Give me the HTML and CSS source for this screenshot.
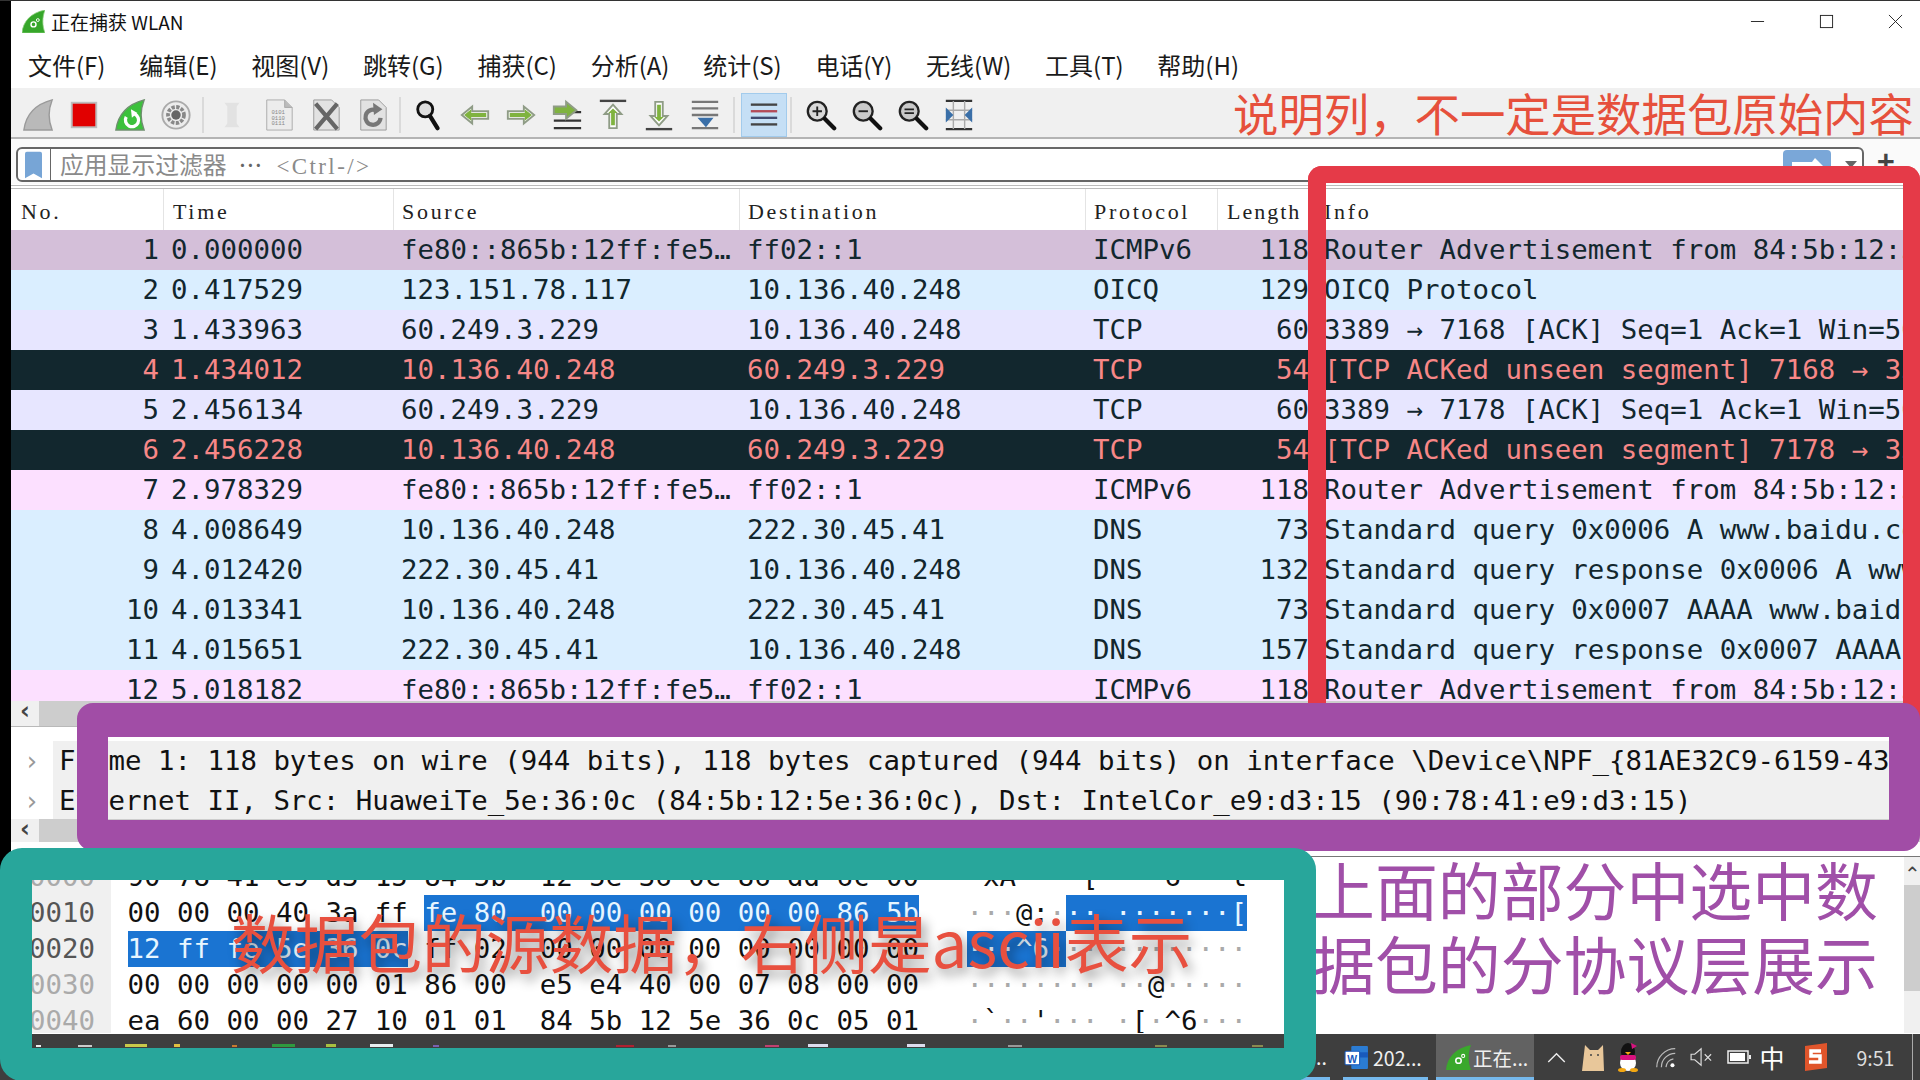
FILE: index.html
```html
<!DOCTYPE html>
<html lang="zh-CN">
<head>
<meta charset="utf-8">
<title>正在捕获 WLAN</title>
<link rel="stylesheet" href="styles.css">
</head>
<body>
<div class="screen">
  <div class="desk">
    <div class="strip"></div>
    <div class="window">
      <header class="titlebar">
        <svg class="applogo" viewBox="0 0 24 24"><path d="M0 24C1 12 9 3 24 0c-3 8-3 16 0 24z" fill="#36a62a" stroke="#8ccf7c" stroke-width=".8"/><circle cx="12" cy="15" r="2.600" fill="none" stroke="#fff" stroke-width="1.500"/><circle cx="16.500" cy="10.500" r="1.500" fill="none" stroke="#fff"/></svg>
        <span class="apptitle">正在捕获 WLAN</span>
        <div class="winctl">
          <svg viewBox="0 0 16 16"><path d="M1 8h14" stroke="#222" fill="none"/></svg>
          <svg viewBox="0 0 16 16"><rect x="1.500" y="1.500" width="13" height="13" stroke="#222" fill="none"/></svg>
          <svg viewBox="0 0 16 16"><path d="M1 1l14 14M15 1L1 15" stroke="#222" fill="none"/></svg>
        </div>
      </header>
      <nav class="menubar">
        <span>文件(F)</span><span>编辑(E)</span><span>视图(V)</span><span>跳转(G)</span><span>捕获(C)</span><span>分析(A)</span><span>统计(S)</span><span>电话(Y)</span><span>无线(W)</span><span>工具(T)</span><span>帮助(H)</span>
      </nav>
      <div class="toolbar">
        <div class="tb"><svg viewBox="0 0 34 34"><path d="M2 33C4 18 13 6 32 1c-4 10-4 22 0 32z" fill="#b9b9b9" stroke="#9a9a9a" stroke-width="1.500"/></svg></div>
        <div class="tb"><svg viewBox="0 0 34 34"><rect x="4" y="4" width="26" height="26" fill="#e10000" stroke="#bdbdbd" stroke-width="2"/></svg></div>
        <div class="tb"><svg viewBox="0 0 34 34"><path d="M2 33C4 18 13 6 32 1c-4 10-4 22 0 32z" fill="#3cc13c" stroke="#6e8f6e" stroke-width="1.500"/><path d="M13 19a7 7 0 1 0 9-3" fill="none" stroke="#fff" stroke-width="3.500"/><path d="M18 11l7 4-6 5z" fill="#fff"/></svg></div>
        <div class="tb"><svg viewBox="0 0 34 34"><circle cx="17" cy="17" r="14.500" fill="#ececec" stroke="#aaa" stroke-width="2"/><circle cx="17" cy="17" r="8.500" fill="none" stroke="#888" stroke-width="4" stroke-dasharray="3.500 1.500"/><circle cx="17" cy="17" r="5" fill="#666"/></svg></div>
        <div class="sep"></div>
        <div class="tb wide"><svg viewBox="0 0 34 34"><path d="M9 4h16l-3 4v18l3 4H9l3-4V8z" fill="#e2e2e2"/></svg></div>
        <div class="tb wide"><svg viewBox="0 0 34 34"><path d="M4 1h19l8 8v24H4z" fill="#ececec" stroke="#aaa"/><path d="M23 1v8h8" fill="#bbb" stroke="#aaa"/><text x="9" y="16" class="bits">0101</text><text x="9" y="22" class="bits">0110</text><text x="9" y="28" class="bits">0111</text></svg></div>
        <div class="tb wide"><svg viewBox="0 0 34 34"><path d="M4 1h19l8 8v24H4z" fill="#e2e2e2" stroke="#999"/><path d="M6 5l23 27M29 5L6 32" stroke="#666" stroke-width="4.500"/></svg></div>
        <div class="tb wide"><svg viewBox="0 0 34 34"><path d="M4 1h19l8 8v24H4z" fill="#e2e2e2" stroke="#999"/><path d="M25 20a8 8 0 1 1-5-8" fill="none" stroke="#777" stroke-width="4.500"/><path d="M17 4l10 7-9 6z" fill="#777"/></svg></div>
        <div class="sep sep2"></div>
        <div class="tb"><svg viewBox="0 0 34 34"><circle cx="13" cy="11" r="8" fill="#ddd" stroke="#111" stroke-width="3"/><path d="M18 18l8 13" stroke="#111" stroke-width="4.500" stroke-linecap="round"/></svg></div>
        <div class="tb"><svg viewBox="0 0 34 34"><path d="M3 17L14 8v5h17v8H14v5z" fill="#fff" stroke="#8f9c86" stroke-width="2"/><path d="M7 17l5-4v3h16v2H12v3z" fill="#7fb33f" stroke="#7fb33f" stroke-width="2"/></svg></div>
        <div class="tb"><svg viewBox="0 0 34 34"><path d="M31 17L20 8v5H3v8h17v5z" fill="#fff" stroke="#8f9c86" stroke-width="2"/><path d="M27 17l-5-4v3H6v2h16v3z" fill="#7fb33f" stroke="#7fb33f" stroke-width="2"/></svg></div>
        <div class="tb"><svg viewBox="0 0 34 34"><path d="M3 14h29M3 23h29M3 31h29" stroke="#333" stroke-width="2.500"/><path d="M27 12L16 3v5H3v8h13v5z" fill="#7fb33f" stroke="#8f9c86" stroke-width="2"/></svg></div>
        <div class="tb"><svg viewBox="0 0 34 34"><path d="M3 2h28" stroke="#444" stroke-width="2.500"/><path d="M17 6l9 10h-5v15h-8V16H8z" fill="#fff" stroke="#8f9c86" stroke-width="2"/><path d="M17 10l5 5h-3v13h-4V15h-3z" fill="#7fb33f"/></svg></div>
        <div class="tb"><svg viewBox="0 0 34 34"><path d="M3 32h28" stroke="#444" stroke-width="2.500"/><path d="M17 28l9-10h-5V3h-8v15H8z" fill="#fff" stroke="#8f9c86" stroke-width="2"/><path d="M17 24l5-5h-3V6h-4v13h-3z" fill="#7fb33f"/></svg></div>
        <div class="tb"><svg viewBox="0 0 34 34"><path d="M3 3h28M3 10h28M3 17h28M3 31h28" stroke="#777" stroke-width="2.500"/><path d="M9 20h17l-8 10z" fill="#3a6fa8"/></svg></div>
        <div class="sep sep3"></div>
        <div class="tb active"><svg viewBox="0 0 34 34"><path d="M3 6h28" stroke="#444" stroke-width="2.500"/><path d="M3 13h28" stroke="#b34a58" stroke-width="2.500"/><path d="M3 20h28" stroke="#404a70" stroke-width="2.500"/><path d="M3 27h28" stroke="#444" stroke-width="2.500"/></svg></div>
        <div class="sep sep4"></div>
        <div class="tb"><svg viewBox="0 0 34 34"><circle cx="13" cy="13" r="10" fill="#d8d8d8" stroke="#222" stroke-width="2.500"/><path d="M8 13h10M13 8v10" stroke="#222" stroke-width="2"/><path d="M21 21l10 10" stroke="#111" stroke-width="4.500" stroke-linecap="round"/></svg></div>
        <div class="tb"><svg viewBox="0 0 34 34"><circle cx="13" cy="13" r="10" fill="#c9c9c9" stroke="#222" stroke-width="2.500"/><path d="M8 13h10" stroke="#222" stroke-width="2"/><path d="M21 21l10 10" stroke="#111" stroke-width="4.500" stroke-linecap="round"/></svg></div>
        <div class="tb"><svg viewBox="0 0 34 34"><circle cx="13" cy="13" r="10" fill="#c9c9c9" stroke="#222" stroke-width="2.500"/><path d="M8 11h10M8 15h10" stroke="#222" stroke-width="2"/><path d="M21 21l10 10" stroke="#111" stroke-width="4.500" stroke-linecap="round"/></svg></div>
        <div class="tb"><svg viewBox="0 0 34 34"><path d="M3 2h28M3 32h28" stroke="#333" stroke-width="2.500"/><path d="M3 12h28M3 22h28M11 2v30M23 2v30" stroke="#aaa" stroke-width="1.500"/><path d="M3 9l8 8-8 8zM31 9l-8 8 8 8z" fill="#3a6fa8"/></svg></div>
      </div>
      <div class="filterbar">
        <div class="filterbox">
          <svg class="bookmark" viewBox="0 0 18 28"><path d="M0 2a2 2 0 0 1 2-2h14a2 2 0 0 1 2 2v26l-9-5-9 5z" fill="#77a5d6"/></svg>
          <span class="filtertext">应用显示过滤器<span class="dots">⋯</span><span class="hint">&lt;Ctrl-/&gt;</span></span>
          <div class="applybtn"><svg viewBox="0 0 48 30"><rect width="48" height="30" rx="4" fill="#7aa7d8"/><path d="M9 12h20l3-4 8 8-8 8v-5H9z" fill="#fff"/></svg></div>
          <span class="dropdown"></span>
        </div>
        <span class="plus">+</span>
      </div>
      <div class="rule"></div>
      <div class="listhead grid">
        <span class="c-no">No.</span><span class="c-time">Time</span><span class="c-src">Source</span><span class="c-dst">Destination</span><span class="c-pr">Protocol</span><span class="c-len">Length</span><span class="c-info">Info</span>
      </div>
      <section class="list">
        <div class="row grid icmp1"><span class="n">1</span><span class="t">0.000000</span><span class="s">fe80::865b:12ff:fe5…</span><span class="s">ff02::1</span><span class="s">ICMPv6</span><span class="n">118</span><span class="i">Router Advertisement from 84:5b:12:5e:36:0c</span></div>
        <div class="row grid blue"><span class="n">2</span><span class="t">0.417529</span><span class="s">123.151.78.117</span><span class="s">10.136.40.248</span><span class="s">OICQ</span><span class="n">129</span><span class="i">OICQ Protocol</span></div>
        <div class="row grid tcp"><span class="n">3</span><span class="t">1.433963</span><span class="s">60.249.3.229</span><span class="s">10.136.40.248</span><span class="s">TCP</span><span class="n">60</span><span class="i">3389 → 7168 [ACK] Seq=1 Ack=1 Win=5000 Len=0</span></div>
        <div class="row grid bad"><span class="n">4</span><span class="t">1.434012</span><span class="s">10.136.40.248</span><span class="s">60.249.3.229</span><span class="s">TCP</span><span class="n">54</span><span class="i">[TCP ACKed unseen segment] 7168 → 3389 [ACK] Seq=1</span></div>
        <div class="row grid tcp"><span class="n">5</span><span class="t">2.456134</span><span class="s">60.249.3.229</span><span class="s">10.136.40.248</span><span class="s">TCP</span><span class="n">60</span><span class="i">3389 → 7178 [ACK] Seq=1 Ack=1 Win=5000 Len=0</span></div>
        <div class="row grid bad"><span class="n">6</span><span class="t">2.456228</span><span class="s">10.136.40.248</span><span class="s">60.249.3.229</span><span class="s">TCP</span><span class="n">54</span><span class="i">[TCP ACKed unseen segment] 7178 → 3389 [ACK] Seq=1</span></div>
        <div class="row grid pink"><span class="n">7</span><span class="t">2.978329</span><span class="s">fe80::865b:12ff:fe5…</span><span class="s">ff02::1</span><span class="s">ICMPv6</span><span class="n">118</span><span class="i">Router Advertisement from 84:5b:12:5e:36:0c</span></div>
        <div class="row grid blue"><span class="n">8</span><span class="t">4.008649</span><span class="s">10.136.40.248</span><span class="s">222.30.45.41</span><span class="s">DNS</span><span class="n">73</span><span class="i">Standard query 0x0006 A www.baidu.com</span></div>
        <div class="row grid blue"><span class="n">9</span><span class="t">4.012420</span><span class="s">222.30.45.41</span><span class="s">10.136.40.248</span><span class="s">DNS</span><span class="n">132</span><span class="i">Standard query response 0x0006 A www.baidu.com</span></div>
        <div class="row grid blue"><span class="n">10</span><span class="t">4.013341</span><span class="s">10.136.40.248</span><span class="s">222.30.45.41</span><span class="s">DNS</span><span class="n">73</span><span class="i">Standard query 0x0007 AAAA www.baidu.com</span></div>
        <div class="row grid blue"><span class="n">11</span><span class="t">4.015651</span><span class="s">222.30.45.41</span><span class="s">10.136.40.248</span><span class="s">DNS</span><span class="n">157</span><span class="i">Standard query response 0x0007 AAAA www.baidu.com</span></div>
        <div class="row grid pink"><span class="n">12</span><span class="t">5.018182</span><span class="s">fe80::865b:12ff:fe5…</span><span class="s">ff02::1</span><span class="s">ICMPv6</span><span class="n">118</span><span class="i">Router Advertisement from 84:5b:12:5e:36:0c</span></div>
      </section>
      <div class="hscroll listscroll"><span class="harrow">‹</span><span class="thumb"></span></div>
      <section class="details">
        <div class="drow"><span class="exp">›</span><span class="dtext">Frame 1: 118 bytes on wire (944 bits), 118 bytes captured (944 bits) on interface \Device\NPF_{81AE32C9-6159-43A1-8F2C-7D1E0A5B6C33}, id 0</span></div>
        <div class="drow"><span class="exp">›</span><span class="dtext">Ethernet II, Src: HuaweiTe_5e:36:0c (84:5b:12:5e:36:0c), Dst: IntelCor_e9:d3:15 (90:78:41:e9:d3:15)</span></div>
      </section>
      <div class="hscroll detailscroll"><span class="harrow">‹</span><span class="thumb"></span></div>
      <section class="hexpane">
        <div class="hexrows">
          <div class="hexrow"><span class="off dim">0000</span><span class="hex">90 78 41 e9 d3 15 84 5b  12 5e 36 0c 86 dd 6c 00</span><span class="asc"><i>·</i>xA<i>····</i>[  <i>·</i>^6<i>···</i>l<i>·</i></span></div>
          <div class="hexrow"><span class="off">0010</span><span class="hex">00 00 00 40 3a ff <b>fe 80  00 00 00 00 00 00 86 5b</b></span><span class="asc"><i>···</i>@:<i>·</i><b>·· ·······[</b></span></div>
          <div class="hexrow"><span class="off">0020</span><span class="hex"><b>12 ff fe 5e 36 0c</b> ff 02  00 00 00 00 00 00 00 00</span><span class="asc"><b>···^6·</b><i>··</i> <i>········</i></span></div>
          <div class="hexrow"><span class="off dim">0030</span><span class="hex">00 00 00 00 00 01 86 00  e5 e4 40 00 07 08 00 00</span><span class="asc"><i>········</i> <i>··</i>@<i>·····</i></span></div>
          <div class="hexrow"><span class="off dim">0040</span><span class="hex">ea 60 00 00 27 10 01 01  84 5b 12 5e 36 0c 05 01</span><span class="asc"><i>·</i>`<i>··</i>'<i>···</i> <i>·</i>[<i>·</i>^6<i>···</i></span></div>
        </div>
        <div class="vscroll"><span class="varrow">⌃</span><span class="vthumb"></span></div>
      </section>
    </div>
  </div>
  <footer class="taskbar">
    <svg class="peek" viewBox="0 0 1316 46"><rect x="36" y="11" width="5" height="2" fill="#eee"/><rect x="78" y="11" width="14" height="2" fill="#ccc"/><rect x="125" y="10" width="22" height="3" fill="#c9c94a"/><rect x="174" y="10" width="6" height="3" fill="#e0c040"/><rect x="232" y="11" width="5" height="2" fill="#c87a30"/><rect x="272" y="10" width="23" height="3" fill="#2f9a3f"/><rect x="326" y="10" width="10" height="3" fill="#a8c040"/><rect x="370" y="10" width="23" height="3" fill="#e8eef0"/><rect x="433" y="11" width="6" height="2" fill="#7a60b0"/><rect x="616" y="11" width="18" height="2" fill="#b02030"/><rect x="668" y="11" width="8" height="2" fill="#999"/><rect x="765" y="11" width="14" height="2" fill="#c04070"/><rect x="808" y="10" width="20" height="3" fill="#dde"/><rect x="907" y="10" width="18" height="3" fill="#dde"/><rect x="1008" y="11" width="14" height="2" fill="#999"/><rect x="1155" y="11" width="12" height="2" fill="#8a8a50"/><rect x="1252" y="11" width="11" height="2" fill="#8a8a50"/></svg>
    <span class="tk-dots">..</span>
    <div class="tk-item tk-word"><svg viewBox="0 0 24 24"><rect x="7" y="1" width="16" height="22" rx="1" fill="#2b7cd3"/><rect x="7" y="7" width="16" height="5" fill="#185abd"/><rect x="1" y="6" width="14" height="13" rx="1" fill="#fff" stroke="#185abd"/><text x="3" y="17" class="w">W</text></svg><span>202...</span></div>
    <div class="tk-item tk-active"><svg viewBox="0 0 24 24"><path d="M0 24C1 12 9 3 24 0c-3 8-3 16 0 24z" fill="#3aa82c"/><circle cx="12" cy="15" r="2.600" fill="none" stroke="#fff" stroke-width="1.500"/><circle cx="16.500" cy="10.500" r="1.500" fill="none" stroke="#fff"/></svg><span>正在...</span></div>
    <div class="tray">
      <svg class="t-chev" viewBox="0 0 20 12"><path d="M1 11l9-9 9 9" fill="none" stroke="#eee" stroke-width="1.500"/></svg>
      <svg class="t-cat" viewBox="0 0 26 30"><path d="M4 3l5 5h8l5-5 1 26H1z" fill="#e8c79a"/><circle cx="10" cy="13" r="1" fill="#444"/><circle cx="17" cy="13" r="1" fill="#444"/></svg>
      <svg class="t-qq" viewBox="0 0 22 30"><ellipse cx="11" cy="10" rx="7" ry="9" fill="#111"/><ellipse cx="11" cy="21" rx="8" ry="8" fill="#fff"/><rect x="3" y="13" width="16" height="5" rx="2" fill="#d8127f"/><path d="M14 1l6 3-5 3z" fill="#d8127f"/><path d="M8 10h6l-3 3z" fill="#f3a712"/><ellipse cx="5" cy="28" rx="4" ry="2" fill="#f3a712"/><ellipse cx="17" cy="28" rx="4" ry="2" fill="#f3a712"/></svg>
      <svg class="t-wifi" viewBox="0 0 26 26"><path d="M3 24a20 20 0 0 1 20-20M8 24a15 15 0 0 1 15-15M13 24a10 10 0 0 1 8-9" fill="none" stroke="#bbb" stroke-width="1.300"/><circle cx="20" cy="22" r="2.200" fill="#fff"/></svg>
      <svg class="t-vol" viewBox="0 0 26 22"><path d="M1 8h4l7-6v18l-7-6H1z" fill="none" stroke="#ddd" stroke-width="1.300"/><path d="M16 8l7 7M23 8l-7 7" stroke="#ddd" stroke-width="1.300"/></svg>
      <svg class="t-bat" viewBox="0 0 24 14"><rect x="1" y="1" width="20" height="12" fill="none" stroke="#eee" stroke-width="1.500"/><rect x="3" y="3" width="15" height="8" fill="#fff"/><rect x="22" y="5" width="2" height="4" fill="#eee"/></svg>
      <span class="t-ime">中</span>
      <svg class="t-sogou" viewBox="0 0 26 28"><path d="M3 3l22-3v25L3 28z" fill="#e0552b"/><path d="M19 8H9v5h9v6H7" fill="none" stroke="#fff" stroke-width="3.500"/></svg>
      <span class="t-time">9:51</span>
      <span class="t-desk"></span>
    </div>
    <div class="tk-strips"><span class="st1"></span><span class="st2"></span><span class="st3"></span></div>
  </footer>

  <div class="note side">上面的部分中选中数<br>据包的分协议层展示</div>
  <div class="note-box red"></div>
  <div class="note-box purple"></div>
  <div class="note-box teal"></div>
  <div class="note top">说明列，不一定是数据包原始内容</div>
  <div class="note raw">数据包的源数据，右侧是ascii表示</div>
</div>
</body>
</html>
```
FILE: styles.css
```css
* { box-sizing: border-box; }
html, body { margin: 0; padding: 0; background: #fff; }
body { font-family: "Noto Sans CJK SC", "Noto Sans", sans-serif; color: #111; }
.screen { position: relative; width: 1920px; height: 1080px; overflow: hidden; display: flex; flex-direction: column; border-top: 1px solid #333; }
.desk { flex: 1; display: flex; min-height: 0; }
.strip { width: 11px; background: #000; flex: none; }
.window { flex: 1; min-width: 0; display: flex; flex-direction: column; background: #fff; }

.titlebar { height: 40px; display: flex; align-items: center; flex: none; padding-left: 11px; }
.applogo { width: 23px; height: 23px; }
.apptitle { font-size: 19px; margin-left: 6px; line-height: 1; }
.winctl { margin-left: auto; display: flex; gap: 54px; padding-right: 17px; }
.winctl svg { width: 15px; height: 15px; display: block; }

.menubar { height: 47px; flex: none; display: flex; align-items: center; gap: 33.700px; padding: 1px 0 0 17px; font-size: 24px; line-height: 1; color: #1a1a1a; }

.toolbar { height: 51px; flex: none; display: flex; align-items: center; padding: 4px 0 0 4px; background: #f0f0f0; border-bottom: 2px solid #b4b4b4; }
.tb { width: 46px; height: 44px; flex: none; display: flex; align-items: center; justify-content: center; }
.tb.wide { width: 47px; }
.tb svg { width: 32px; height: 32px; }
.tb.active { background: #c5dff5; border: 1px solid #a2cbec; }
.sep { width: 2px; height: 36px; background: #dadada; flex: none; margin: 0 4px 0 3px; }
.sep2 { margin: 0 5px 0 3px; }
.sep3 { margin: 0 6px 0 5px; }
.sep4 { margin: 0 6px 0 3px; }

.filterbar { height: 45px; flex: none; display: flex; padding: 8px 0 2px 5px; background: #fafafa; }
.filterbox { width: 1848px; height: 35px; border: 2px solid #666; border-radius: 6px; background: #fff; display: flex; align-items: center; padding-left: 7px; overflow: hidden; }
.bookmark { width: 17px; height: 28px; flex: none; }
.filtertext { margin-left: 8px; padding-left: 9px; border-left: 1px solid #666; font-size: 23.800px; line-height: 29px; color: #8a8a8a; white-space: pre; }
.dots { margin-left: 12px; color: #666; }
.hint { margin-left: 14px; font-family: "Liberation Serif", serif; font-size: 23px; letter-spacing: 2.400px; }
.applybtn { margin-left: auto; width: 48px; height: 30px; flex: none; }
.applybtn svg { width: 48px; height: 30px; display: block; }
.dropdown { width: 0; height: 0; margin: 0 5px 0 14px; border-left: 6px solid transparent; border-right: 6px solid transparent; border-top: 7px solid #666; flex: none; }
.plus { margin-left: 13px; font-size: 30px; line-height: 26px; color: #444; font-weight: 700; }
.rule { height: 4px; flex: none; border-top: 1px solid #bbb; border-bottom: 1px solid #bbb; background: #fff; margin-top: 1px; }

.grid { display: grid; grid-template-columns: 153px 230px 346px 346px 132px 96px 1fr; }
.bits { font-family: "Liberation Mono", monospace; font-size: 6px; fill: #888; }
.listhead { height: 41px; flex: none; align-items: stretch; font-family: "Liberation Serif", serif; font-size: 22px; letter-spacing: 2.700px; line-height: 46px; color: #222; background: #fff; overflow: hidden; }
.listhead span { border-right: 1px solid #e4e4e4; white-space: pre; }
.listhead .c-info { border-right: 0; }
.listhead .c-len { letter-spacing: 2px; }
.c-no { padding-left: 10px; }
.c-time { padding-left: 9px; }
.c-src, .c-dst, .c-pr { padding-left: 8px; }
.c-len { padding-left: 9px; }
.c-info { padding-left: 10px; }

.list { height: 471px; flex: none; overflow: hidden; font-family: "DejaVu Sans Mono", monospace; font-size: 27.400px; }
.row { height: 40px; line-height: 40px; white-space: pre; overflow: hidden; color: #12272e; }
.row span { overflow: hidden; }
.row .n { text-align: right; padding-right: 5px; }
.row .t { padding-left: 7px; }
.row .s { padding-left: 7px; }
.row .i { padding-left: 10px; }
.icmp1 { background: #d4bfd9; }
.blue { background: #daeeff; }
.tcp { background: #e7e6ff; }
.pink { background: #fce0ff; }
.bad { background: #12272e; color: #f78787; }

.hscroll { flex: none; display: flex; align-items: stretch; background: #f0f0f0; }
.listscroll { height: 25px; }
.detailscroll { height: 23px; margin-bottom: 14px; }
.harrow { width: 28px; text-align: center; font-family: "DejaVu Sans", sans-serif; font-size: 24px; line-height: 20px; color: #444; font-weight: 700; }
.thumb { flex: 1; background: #cdcdcd; }

.details { height: 93px; flex: none; padding-top: 14px; border-top: 1px solid #b9b9b9; font-family: "DejaVu Sans Mono", monospace; font-size: 27.400px; overflow: hidden; }
.drow { height: 40px; line-height: 40px; display: flex; white-space: pre; }
.exp { width: 42px; flex: none; text-align: center; color: #999; font-family: "DejaVu Sans", sans-serif; font-size: 26px; }
.dtext { flex: 1; background: #f0f0f0; padding-left: 6px; overflow: hidden; color: #111; }

.hexpane { height: 177px; flex: none; display: flex; border-top: 1px solid #777; overflow: hidden; font-family: "DejaVu Sans Mono", monospace; font-size: 27.400px; }
.hexrows { flex: 1; min-width: 0; padding-top: 2px; }
.hexrow { height: 36px; line-height: 36px; display: flex; white-space: pre; color: #111; }
.off { width: 100px; flex: none; text-align: right; padding-right: 16px; background: #f0f0f0; color: #555; }
.off.dim { color: #aaa; }
.hex { margin-left: 16.500px; flex: none; }
.asc { margin-left: 47.500px; flex: none; }
.asc i { font-style: normal; color: #aaa; }
.hexrow b { font-weight: 400; background: #1a74d2; color: #e8f6ff; display: inline-block; height: 36px; }
.vscroll { width: 16px; flex: none; background: #f0f0f0; display: flex; flex-direction: column; }
.varrow { height: 28px; text-align: center; font-family: "DejaVu Sans", sans-serif; font-size: 20px; line-height: 34px; color: #444; }
.vthumb { height: 106px; background: #cdcdcd; }

.taskbar { height: 46px; flex: none; background: #3e3e3e; display: flex; align-items: stretch; position: relative; color: #f0f0f0; font-size: 19.500px; }
.peek { width: 1316px; height: 46px; flex: none; display: block; }
.tk-dots { width: 28px; flex: none; line-height: 46px; padding-left: 0; }
.tk-item { display: flex; align-items: center; flex: none; }
.tk-item svg { width: 25px; height: 25px; flex: none; }
.tk-word { width: 92px; }
.tk-word span { margin-left: 4px; }
.tk-active { width: 98px; background: #626262; padding-left: 10px; }
.tk-active span { margin-left: 2px; }
.w { font-family: "Liberation Sans", sans-serif; font-size: 10px; font-weight: 700; fill: #185abd; }
.tray { flex: 1; display: flex; align-items: center; position: relative; }
.t-chev { width: 19px; height: 11px; margin-left: 13px; }
.t-cat { width: 26px; height: 30px; margin-left: 15px; }
.t-qq { width: 22px; height: 30px; margin-left: 10px; }
.t-wifi { width: 24px; height: 24px; margin-left: 14.500px; }
.t-vol { width: 24px; height: 20px; margin-left: 12px; }
.t-bat { width: 24px; height: 14px; margin-left: 13px; }
.t-ime { font-size: 25px; margin-left: 9px; color: #fff; line-height: 1; }
.t-sogou { width: 26px; height: 28px; margin-left: 17px; }
.t-time { margin-left: 29px; font-size: 19.500px; color: #ddd; }
.t-desk { position: absolute; right: 7px; top: 0; bottom: 0; width: 1px; background: #aaa; }
.tk-strips { position: absolute; left: 1300px; right: 386px; bottom: 0; height: 3px; display: flex; }
.tk-strips span { background: #76b9ed; display: block; height: 3px; }
.st1 { width: 30px; margin-right: 13px; }
.st2 { width: 85px; margin-right: 8px; }
.st3 { width: 98px; }

.note-box { position: absolute; background: transparent; }
.red { left: 1308px; top: 165px; width: 612px; height: 560px; border: solid #e53a48; border-width: 17px 17px 0 18px; border-radius: 14px 14px 0 0; }
.purple { left: 77px; top: 702px; width: 1843px; height: 148px; border: solid #a14da6; border-width: 34px 31px 31px 31px; border-radius: 16px; }
.teal { left: 0; top: 847px; width: 1316px; height: 233px; border: solid #28a69b; border-width: 32px 32px 33px 32px; border-radius: 22px; }
.note { position: absolute; white-space: nowrap; line-height: 1; }
.top { left: 1233px; top: 89px; font-size: 45.400px; color: #e6503c; }
.side { left: 1312px; top: 850px; font-size: 62.900px; line-height: 74px; color: #a04fa8; }
.raw { left: 231px; top: 908px; font-size: 63.700px; color: #e8503f; text-shadow: 4px 6px 12px rgba(0, 0, 0, .45); }
```
